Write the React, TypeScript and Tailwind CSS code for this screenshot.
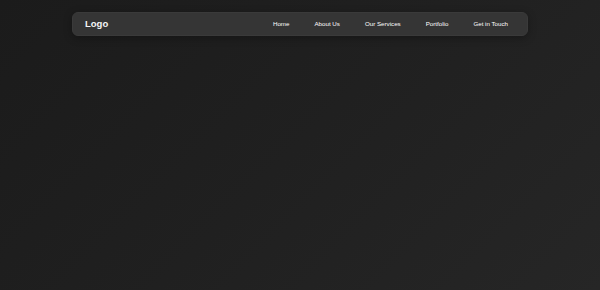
export default function App() {
  const links = ["Home", "About Us", "Our Services", "Portfolio", "Get in Touch"];
  return (
    <div
      className="min-h-screen w-full bg-[linear-gradient(135deg,#1b1b1b_0%,#202020_50%,#262626_100%)] pt-[12px]"
      style={{ fontFamily: '"Liberation Sans", Arial, sans-serif' }}
    >
      <nav className="mx-auto flex h-[24px] w-[456px] items-center justify-between rounded-[6px] border border-[#3a3a3a] bg-[#353535] pl-[12px] pr-[19px] shadow-[0_2px_8px_rgba(0,0,0,0.3)]">
        <div className="text-[9.5px] font-bold leading-none text-[#f5f5f5]">Logo</div>
        <ul className="flex items-center gap-[25px]">
          {links.map((l) => (
            <li key={l} className="text-[6.2px] leading-none text-white">
              {l}
            </li>
          ))}
        </ul>
      </nav>
    </div>
  );
}
